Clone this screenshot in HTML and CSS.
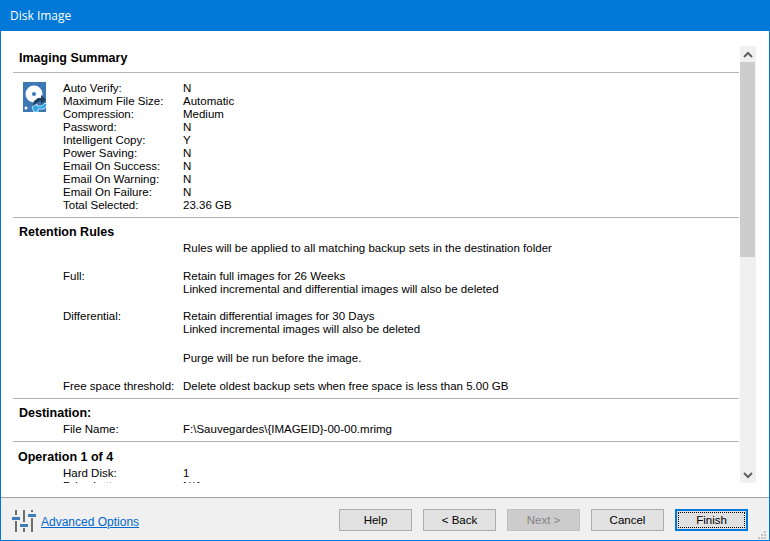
FILE: index.html
```html
<!DOCTYPE html>
<html lang="en">
<head>
    <meta charset="UTF-8">
    <title>Disk Image</title>
    <link rel="stylesheet" href="styles.css">
</head>
<body>
    <div class="window">
        <div class="title-bar">Disk Image</div>
        <div class="content">
            <div class="summary">
                <div class="section section-first">
                    <h3 class="heading heading-ruled">Imaging Summary</h3>
                    <div class="summary-body">
                        <svg class="disk-icon" width="24" height="31" viewBox="0 0 24 31">
                            <rect x="0" y="0" width="23" height="30" fill="#3c78b4"/>
                            <circle cx="11" cy="12" r="8.5" fill="#fff"/>
                            <circle cx="11" cy="12" r="2" fill="#3c78b4"/>
                            <circle cx="3" cy="26" r="1.5" fill="#fff"/>
                            <path d="M10 24 L11 19 L15 16 L18 16 L18 13 L23 18 L18 22 L18 19 L15 20 Z" fill="#1f3f5f"/>
                            <path d="M9 25 L14 22 L14 24 L19 24 L22 21 L24 23 L21 27 L15 27 L15 30 L11 30 Z" fill="#2ea3e6" stroke="#fff" stroke-width="0.7"/>
                        </svg>
                        <div class="rows rows-beside">
                            <div class="row"><span>Auto Verify:</span><span>N</span></div>
                            <div class="row"><span>Maximum File Size:</span><span>Automatic</span></div>
                            <div class="row"><span>Compression:</span><span>Medium</span></div>
                            <div class="row"><span>Password:</span><span>N</span></div>
                            <div class="row"><span>Intelligent Copy:</span><span>Y</span></div>
                            <div class="row"><span>Power Saving:</span><span>N</span></div>
                            <div class="row"><span>Email On Success:</span><span>N</span></div>
                            <div class="row"><span>Email On Warning:</span><span>N</span></div>
                            <div class="row"><span>Email On Failure:</span><span>N</span></div>
                            <div class="row"><span>Total Selected:</span><span>23.36 GB</span></div>
                        </div>
                    </div>
                </div>
                <div class="section">
                    <h3 class="heading">Retention Rules</h3>
                    <div class="rows">
                        <div class="row"><span></span><span>Rules will be applied to all matching backup sets in the destination folder</span></div>
                        <div class="row gap-m"><span>Full:</span><span>Retain full images for 26 Weeks</span></div>
                        <div class="row"><span></span><span>Linked incremental and differential images will also be deleted</span></div>
                        <div class="row gap-s"><span>Differential:</span><span>Retain differential images for 30 Days</span></div>
                        <div class="row"><span></span><span>Linked incremental images will also be deleted</span></div>
                        <div class="row gap-l"><span></span><span>Purge will be run before the image.</span></div>
                        <div class="row gap-m"><span>Free space threshold:</span><span>Delete oldest backup sets when free space is less than 5.00 GB</span></div>
                    </div>
                </div>
                <div class="section">
                    <h3 class="heading">Destination:</h3>
                    <div class="rows">
                        <div class="row"><span>File Name:</span><span>F:\Sauvegardes\{IMAGEID}-00-00.mrimg</span></div>
                    </div>
                </div>
                <div class="section section-op">
                    <h3 class="heading heading-op">Operation 1 of 4</h3>
                    <div class="rows">
                        <div class="row"><span>Hard Disk:</span><span>1</span></div>
                        <div class="row"><span>Drive Letter:</span><span>N/A</span></div>
                    </div>
                </div>
            </div>
            <div class="scrollbar">
                <div class="scroll-btn">
                    <svg width="10" height="7" viewBox="0 0 10 7"><path d="M1 6 L5 2 L9 6" fill="none" stroke="#606060" stroke-width="2"/></svg>
                </div>
                <div class="scroll-track"><div class="scroll-thumb"></div></div>
                <div class="scroll-btn">
                    <svg width="10" height="7" viewBox="0 0 10 7"><path d="M1 1 L5 5 L9 1" fill="none" stroke="#606060" stroke-width="2"/></svg>
                </div>
            </div>
        </div>
        <div class="footer">
            <svg class="options-icon" width="24" height="22" viewBox="0 0 24 22">
                <rect x="3" y="0" width="2" height="5" fill="#6d6d6d"/>
                <rect x="3" y="11" width="2" height="11" fill="#6d6d6d"/>
                <rect x="11" y="0" width="2" height="12" fill="#6d6d6d"/>
                <rect x="11" y="18" width="2" height="4" fill="#6d6d6d"/>
                <rect x="19" y="0" width="2" height="2" fill="#6d6d6d"/>
                <rect x="19" y="8" width="2" height="14" fill="#6d6d6d"/>
                <rect x="0" y="7" width="8" height="3" fill="#3f7cb8"/>
                <rect x="8" y="14" width="8" height="3" fill="#3f7cb8"/>
                <rect x="16" y="4" width="8" height="3" fill="#3f7cb8"/>
            </svg>
            <a class="options-link" href="#">Advanced Options</a>
            <div class="buttons">
                <button type="button">Help</button>
                <button type="button">&lt; Back</button>
                <button type="button" disabled>Next &gt;</button>
                <button type="button">Cancel</button>
                <button type="button" class="default-btn"><span>Finish</span></button>
            </div>
            <svg class="grip" width="9" height="9" viewBox="0 0 9 9">
                <path d="M6 0h2v2h-2z M3 3h2v2h-2z M6 3h2v2h-2z M0 6h2v2h-2z M3 6h2v2h-2z M6 6h2v2h-2z" fill="#c4c4c4"/>
            </svg>
        </div>
    </div>
</body>
</html>
```

FILE: styles.css
```css
* {
    box-sizing: border-box;
}

body {
    margin: 0;
    font-family: "Liberation Sans", Arial, sans-serif;
    font-size: 11.5px;
    color: #000;
}

.window {
    position: relative;
    display: flex;
    flex-direction: column;
    width: 770px;
    height: 541px;
    border: 1px solid #0078d7;
    border-top: none;
    background-color: #fff;
}

.title-bar {
    height: 31px;
    margin: 0 -1px;
    padding: 0 10px;
    line-height: 32px;
    font-family: "Open Sans", sans-serif;
    font-size: 12px;
    color: #fff;
    background-color: #0078d7;
}

.content {
    display: flex;
    flex: 1;
    min-height: 0;
    padding: 15px 13px 14px 12px;
}

.summary {
    flex: 1;
    min-width: 0;
    overflow: hidden;
}

.section {
    padding: 6px 0 5px;
    border-bottom: 1px solid #b4b4b4;
}

.section-first {
    padding-top: 4px;
}

.section-op {
    border-bottom: none;
    padding-top: 7px;
}

.heading {
    margin: 0;
    padding-left: 6px;
    font-size: 12.5px;
    line-height: 16px;
    font-weight: bold;
    padding-bottom: 2px;
}

.heading-ruled {
    margin: 0 0 9px;
    padding-bottom: 6px;
    border-bottom: 1px solid #b4b4b4;
}

.heading-op {
    padding-left: 5px;
}

.summary-body {
    display: flex;
}

.disk-icon {
    flex: none;
    margin: 0 16px 0 10px;
}

.rows {
    padding-left: 50px;
}

.rows-beside {
    padding-left: 0;
}

.row {
    display: grid;
    grid-template-columns: 120px 1fr;
    height: 13px;
    line-height: 13px;
    white-space: nowrap;
}

.gap-s {
    margin-top: 14px;
}

.gap-m {
    margin-top: 15px;
}

.gap-l {
    margin-top: 16px;
}

.scrollbar {
    display: flex;
    flex-direction: column;
    flex: none;
    width: 16px;
    margin-left: 1px;
    background-color: #f0f0f0;
}

.scroll-btn {
    display: flex;
    align-items: center;
    justify-content: center;
    height: 16px;
}

.scroll-track {
    flex: 1;
}

.scroll-thumb {
    width: 15px;
    height: 195px;
    background-color: #cdcdcd;
}

.footer {
    display: flex;
    align-items: center;
    height: 43px;
    padding-left: 11px;
    border-top: 1px solid #a0a0a0;
    background-color: #f0f0f0;
}

.options-icon {
    flex: none;
    margin-top: 3px;
}

.options-link {
    margin-left: 5px;
    margin-top: 5px;
    font-size: 12px;
    color: #0066cc;
}

.buttons {
    display: flex;
    gap: 11px;
    margin-left: auto;
    margin-right: 21px;
    margin-top: 2px;
}

button {
    width: 73px;
    height: 22px;
    padding: 0;
    font-family: "Liberation Sans", Arial, sans-serif;
    font-size: 11.5px;
    color: #000;
    background-color: #e1e1e1;
    border: 1px solid #adadad;
}

button:disabled {
    color: #838383;
    background-color: #cccccc;
    border-color: #bfbfbf;
}

.default-btn {
    padding: 1px;
    border: 2px solid #0078d7;
}

.default-btn span {
    display: block;
    height: 100%;
    line-height: 14px;
    border: 1px dotted #000;
}

.grip {
    position: absolute;
    right: 2px;
    bottom: 0;
}
```
